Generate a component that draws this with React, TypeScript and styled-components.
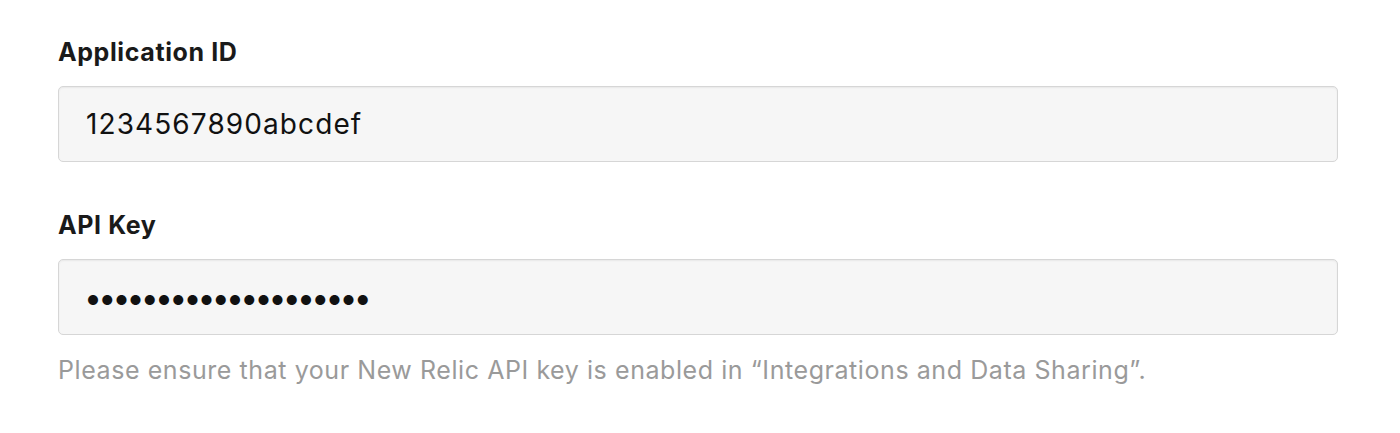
import React from "react";
import styled, { createGlobalStyle } from "styled-components";

const GlobalStyle = createGlobalStyle`
  body {
    margin: 0;
    background: #ffffff;
    font-family: Inter, "Liberation Sans", sans-serif;
  }
`;

const Form = styled.div`
  padding: 37px 62px 0 58px;
  display: flex;
  flex-direction: column;
`;

const Field = styled.div`
  display: flex;
  flex-direction: column;
  margin-bottom: 48px;
`;

const Label = styled.label`
  font-size: 25px;
  line-height: 30px;
  font-weight: 700;
  letter-spacing: 0.6px;
  color: #1a1a1a;
  margin-bottom: 19px;
`;

const Input = styled.input<{ $masked?: boolean }>`
  box-sizing: border-box;
  height: 76px;
  width: 100%;
  padding: 0 ${(p) => (p.$masked ? "25px" : "27px")};
  border: 1px solid #d6d6d6;
  border-radius: 5px;
  background: #f6f6f6;
  box-shadow: inset 0 1px 2px rgba(0, 0, 0, 0.06);
  font-family: Inter, "Liberation Sans", sans-serif;
  font-size: ${(p) => (p.$masked ? "32px" : "28px")};
  letter-spacing: ${(p) => (p.$masked ? "-3.8px" : "1.1px")};
  color: #111;
  outline: none;
`;

const Help = styled.p`
  margin: -28px 0 0;
  font-size: 25px;
  line-height: 30px;
  letter-spacing: 0.57px;
  color: #9a9a9a;
`;

export default function App() {
  return (
    <>
      <GlobalStyle />
      <Form>
        <Field>
          <Label htmlFor="app-id">Application ID</Label>
          <Input id="app-id" type="text" readOnly value="1234567890abcdef" />
        </Field>
        <Field>
          <Label htmlFor="api-key">API Key</Label>
          <Input
            id="api-key"
            type="password"
            readOnly
            $masked
            value="12345678901234567890"
          />
        </Field>
        <Help>
          Please ensure that your New Relic API key is enabled in “Integrations and Data Sharing”.
        </Help>
      </Form>
    </>
  );
}
